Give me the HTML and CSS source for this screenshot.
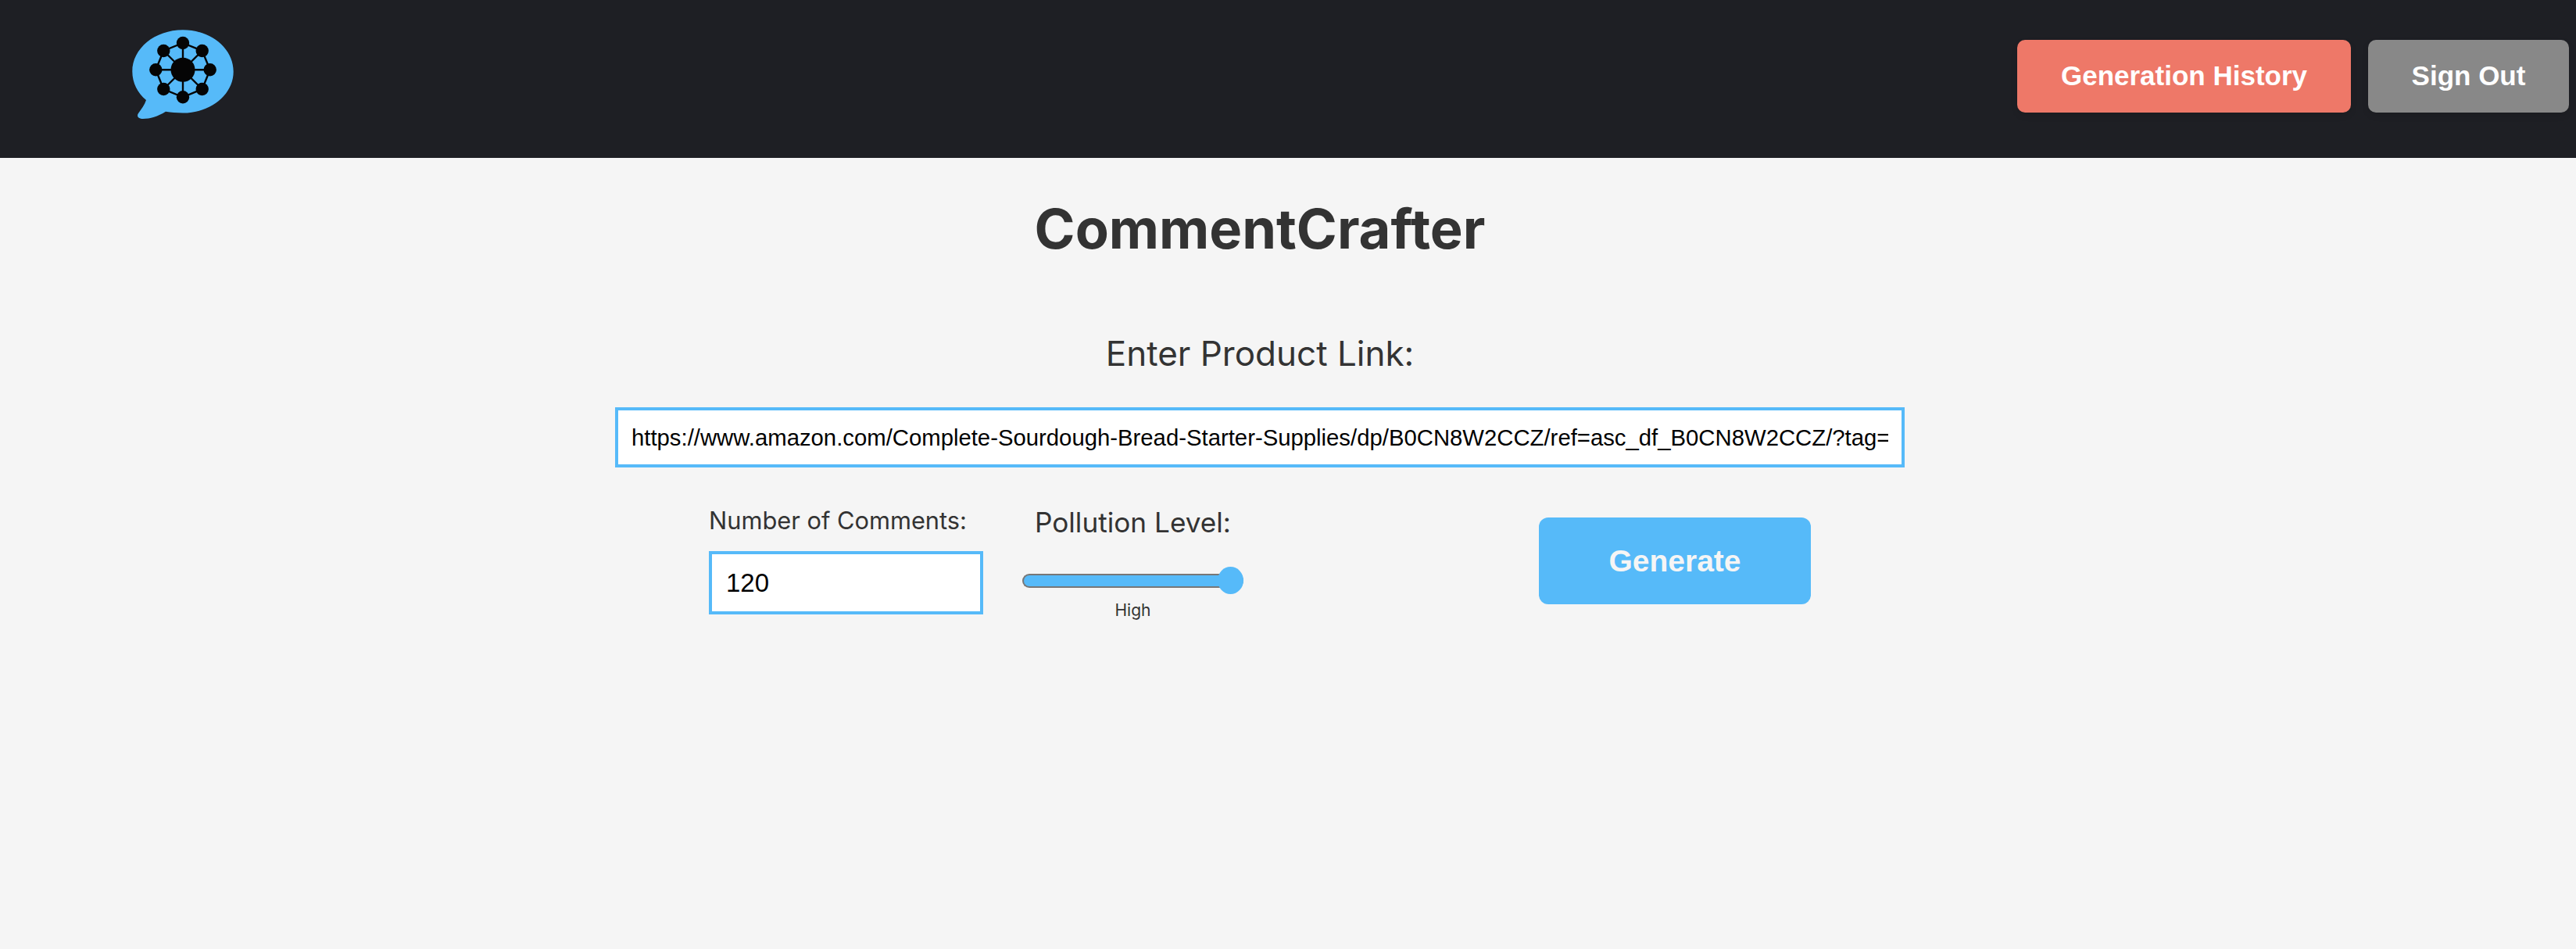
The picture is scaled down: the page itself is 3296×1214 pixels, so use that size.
FILE: index.html
```html
<!DOCTYPE html>
<html lang="en">

<head>
  <meta charset="UTF-8">
  <meta name="viewport" content="width=device-width, initial-scale=1.0">
  <title>CommentCrafter</title>
  <link rel="stylesheet" href="styles.css">
</head>

<body>
  <header class="topbar">
    <svg class="logo" viewBox="29 18 130 114" aria-label="CommentCrafter logo">
      <path fill="#56baf9" d="M94 18.3C130 18.3 158.7 42 158.7 71.5C158.7 101 130 124.5 94 124.5C86 124.5 79 124 72 122.8C62 129 52 132 43 132C37 132 34.5 128.5 37 125C41 119.5 45 114 47 108C36 99 29.3 86 29.3 71.5C29.3 42 58 18.3 94 18.3Z"/>
      <g stroke="#050505" stroke-width="2.4" fill="none">
        <path d="M94 35L118.7 45L128.7 69.3L118.7 94L94 104.3L69.3 94L59.3 69.3L69.3 45Z"/>
        <path d="M94 35V104.3M59.3 69.3H128.7M69.3 45L118.7 94M118.7 45L69.3 94"/>
      </g>
      <g fill="#050505">
        <circle cx="94" cy="69.3" r="15.5"/>
        <circle cx="94" cy="35" r="8.2"/>
        <circle cx="118.7" cy="45" r="8.2"/>
        <circle cx="128.7" cy="69.3" r="8.2"/>
        <circle cx="118.7" cy="94" r="8.2"/>
        <circle cx="94" cy="104.3" r="8.2"/>
        <circle cx="69.3" cy="94" r="8.2"/>
        <circle cx="59.3" cy="69.3" r="8.2"/>
        <circle cx="69.3" cy="45" r="8.2"/>
      </g>
    </svg>
    <nav class="nav-buttons">
      <button class="nav-btn history-btn">Generation History</button>
      <button class="nav-btn signout-btn">Sign Out</button>
    </nav>
  </header>

  <main class="content">
    <h1>CommentCrafter</h1>
    <label class="link-label" for="link">Enter Product Link:</label>
    <input class="link-input" id="link" type="text" value="https://www.amazon.com/Complete-Sourdough-Bread-Starter-Supplies/dp/B0CN8W2CCZ/ref=asc_df_B0CN8W2CCZ/?tag=hyprod-20&linkCode=df0">

    <div class="controls">
      <div class="count-group">
        <label class="count-label" for="count">Number of Comments:</label>
        <input class="count-input" id="count" type="number" value="120">
      </div>
      <div class="pollution-group">
        <label class="pollution-label" for="pollution">Pollution Level:</label>
        <input class="pollution-slider" id="pollution" type="range" min="0" max="2" value="2">
        <span class="pollution-value">High</span>
      </div>
      <button class="generate-btn">Generate</button>
    </div>
  </main>
</body>

</html>
```

FILE: styles.css
```css
* {
  box-sizing: border-box;
}

body {
  font-family: Inter, sans-serif;
  background-color: #f5f5f5;
  color: #333;
  margin: 0;
  padding: 0;
  min-height: 1214px;
}

.topbar {
  display: flex;
  justify-content: space-between;
  align-items: center;
  height: 202px;
  padding: 0 9px 7px 169px;
  background-color: #1e1f24;
}

.logo {
  width: 130px;
  height: 114px;
  margin-top: -5px;
}

.nav-buttons {
  display: flex;
  gap: 22px;
}

.nav-btn {
  height: 93px;
  padding: 0 0 2px;
  font-family: "Liberation Sans", Arial, sans-serif;
  font-size: 35px;
  font-weight: bold;
  color: white;
  border: none;
  border-radius: 10px;
  box-shadow: 0 4px 8px rgba(0, 0, 0, 0.1);
}

.history-btn {
  width: 427px;
  background-color: #ee7868;
}

.signout-btn {
  width: 257px;
  background-color: #888;
}

.content {
  display: flex;
  flex-direction: column;
  align-items: center;
  padding-right: 72px;
}

h1 {
  margin: 48px 0 0;
  font-size: 70.4px;
  line-height: 85px;
  font-weight: 700;
}

.link-label {
  margin-top: 90px;
  font-size: 44px;
  line-height: 54px;
}

.link-input {
  width: 1650px;
  height: 77px;
  margin-top: 42px;
  padding: 0 17px;
  font-family: "Liberation Sans", Arial, sans-serif;
  font-size: 29.3px;
  color: black;
  background-color: white;
  border: 4px solid #56baf9;
  outline: none;
}

.controls {
  display: flex;
  align-items: flex-start;
  width: 1650px;
  margin-top: 48px;
  padding-left: 120px;
}

.count-group {
  display: flex;
  flex-direction: column;
  width: 351px;
}

.count-label {
  margin-top: 1px;
  font-size: 30.8px;
  line-height: 37px;
  white-space: nowrap;
}

.count-input {
  width: 351px;
  height: 81px;
  margin-top: 21px;
  padding: 0 18px;
  font-family: "Liberation Sans", Arial, sans-serif;
  font-size: 33px;
  color: black;
  background-color: white;
  border: 4px solid #56baf9;
  outline: none;
  appearance: textfield;
}

.pollution-group {
  display: flex;
  flex-direction: column;
  align-items: center;
  width: 283px;
  margin-left: 50px;
}

.pollution-label {
  font-size: 35.2px;
  line-height: 44px;
  white-space: nowrap;
}

.pollution-slider {
  width: 283px;
  height: 35px;
  margin: 35px 0 0;
  padding: 0;
  background: transparent;
  appearance: none;
}

.pollution-slider::-webkit-slider-runnable-track {
  height: 18px;
  background-color: #56baf9;
  border: 2px solid #777;
  border-right: none;
  border-radius: 9px;
}

.pollution-slider::-webkit-slider-thumb {
  width: 33px;
  height: 35px;
  margin-top: -10.5px;
  background-color: #56baf9;
  border-radius: 50%;
  appearance: none;
}

.pollution-value {
  margin-top: 8px;
  font-size: 21px;
  line-height: 26px;
}

.generate-btn {
  width: 348px;
  height: 111px;
  margin: 16px 0 0 378px;
  font-family: "Liberation Sans", Arial, sans-serif;
  font-size: 39px;
  font-weight: bold;
  color: #f5f5f5;
  background-color: #56baf9;
  border: none;
  border-radius: 12px;
}
```
